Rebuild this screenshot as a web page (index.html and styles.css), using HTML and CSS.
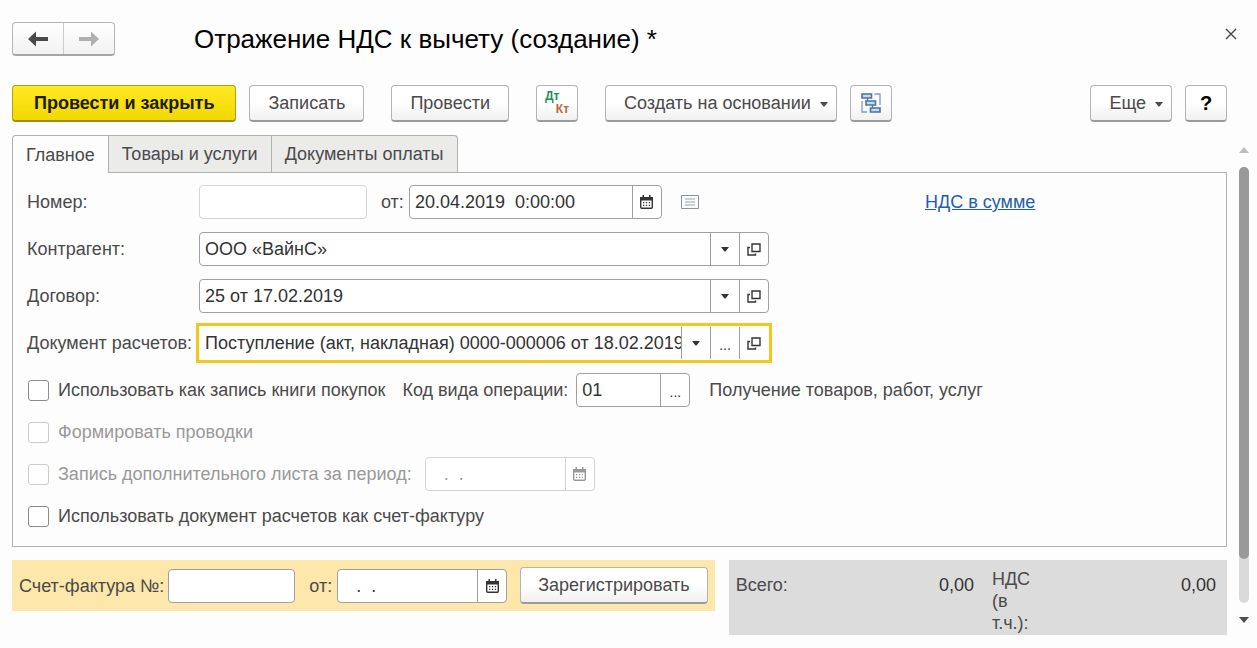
FILE: index.html
```html
<!DOCTYPE html>
<html lang="ru">
<head>
  <meta charset="UTF-8">
  <meta name="viewport" content="width=device-width, initial-scale=1.0">
  <title>Отражение НДС к вычету (создание) *</title>
  <link rel="stylesheet" href="styles.css">
</head>
<body>
  <!-- shared icons -->
  <svg class="sprite" width="0" height="0" aria-hidden="true">
    <symbol id="calendar" viewBox="0 0 13 14">
      <path d="M.7 3v9.300q0 1 1 1h9.600q1 0 1-1V3" fill="none" stroke="currentColor" stroke-width="1.4"/>
      <path d="M0 2h13v3.500H0zM2.500 0H4v3H2.500zM9 0h1.500v3H9z" fill="currentColor"/>
      <path d="M3 7h1.300v1.300H3zM5.900 7h1.300v1.300H5.900zM8.800 7h1.300v1.300H8.800zM3 9.800h1.300v1.300H3zM5.900 9.800h1.300v1.300H5.900zM8.800 9.800h1.300v1.300H8.800z" fill="currentColor"/>
    </symbol>
    <symbol id="open" viewBox="0 0 14 13">
      <path d="M5 1h8v7.500H5zM3 4.500H1V12h7.500V10.500" fill="none" stroke="currentColor" stroke-width="1.4"/>
    </symbol>
    <symbol id="down" viewBox="0 0 8 5">
      <path d="M0 0h8L4.500 4.500h-1z" fill="currentColor"/>
    </symbol>
  </svg>

  <div class="window">
    <header class="header">
      <div class="nav">
        <button type="button" aria-label="Назад"><svg width="20" height="16" viewBox="0 0 20 16"><path d="M8 .5L0 8l8 7.500V10h12V6H8z" fill="#4a4a4a"/></svg></button>
        <button type="button" aria-label="Вперед"><svg width="20" height="16" viewBox="0 0 20 16"><path d="M12 .5L20 8l-8 7.500V10H0V6h12z" fill="#b0b0b0"/></svg></button>
      </div>
      <h1>Отражение НДС к вычету (создание) *</h1>
      <button class="close" type="button" aria-label="Закрыть"><svg width="12" height="12" viewBox="0 0 12 12"><path d="M1 1l10 10M11 1L1 11" stroke="#444" stroke-width="1.400"/></svg></button>
    </header>

    <div class="toolbar">
      <button class="btn btn-main" type="button">Провести и закрыть</button>
      <button class="btn" type="button">Записать</button>
      <button class="btn spaced" type="button">Провести</button>
      <button class="btn btn-icon spaced" type="button"><span class="dtkt"><span class="dt">Дт</span><span class="kt">Кт</span></span></button>
      <button class="btn spaced" type="button">Создать на основании<svg class="caret" width="8" height="5"><use href="#down"/></svg></button>
      <button class="btn btn-icon" type="button" aria-label="Структура подчиненности">
        <svg width="20" height="20" viewBox="0 0 20 20">
          <path d="M13.500 1H19v11M1 8v11h5" fill="none" stroke="#7d9cc0" stroke-width="1.300"/>
          <path d="M1 1h9.500v4H1zM5 8h9.500v4H5zM9.500 15H19v4H9.500z" fill="#c4daf0" stroke="#4673a8" stroke-width="1.600"/>
          <path d="M6.500 5v3M11.500 12v3" stroke="#4673a8" stroke-width="1.300"/>
        </svg>
      </button>
      <button class="btn btn-more" type="button">Еще<svg class="caret" width="8" height="5"><use href="#down"/></svg></button>
      <button class="btn btn-icon btn-help" type="button">?</button>
    </div>

    <div class="body">
      <main class="content">
        <div class="tabs" role="tablist">
          <button class="tab active" type="button" role="tab" aria-selected="true">Главное</button>
          <button class="tab" type="button" role="tab" aria-selected="false">Товары и услуги</button>
          <button class="tab" type="button" role="tab" aria-selected="false">Документы оплаты</button>
        </div>

        <form class="panel">
          <div class="row">
            <div class="row-main">
              <label class="name" for="number">Номер:</label>
              <div class="field number disabled"><input id="number" type="text" disabled></div>
              <label class="from" for="date">от:</label>
              <div class="field date-time">
                <input id="date" type="text" value="20.04.2019  0:00:00">
                <button type="button" aria-label="Выбрать дату"><svg width="13" height="14"><use href="#calendar"/></svg></button>
              </div>
              <svg class="list" width="18" height="14" viewBox="0 0 18 14"><path d="M.5.5h17v13H.5z" fill="#fafbfc" stroke="#8792a3"/><path d="M4 4h10M4 7h10M4 10h10" stroke="#98a5b8"/></svg>
            </div>
            <a href="#">НДС в сумме</a>
          </div>
          <div class="row">
            <label class="name" for="partner">Контрагент:</label>
            <div class="field wide">
              <input id="partner" type="text" value="ООО «ВайнС»">
              <button type="button" aria-label="Выбрать"><svg width="8" height="5"><use href="#down"/></svg></button>
              <button type="button" aria-label="Открыть"><svg width="14" height="13"><use href="#open"/></svg></button>
            </div>
          </div>
          <div class="row">
            <label class="name" for="contract">Договор:</label>
            <div class="field wide">
              <input id="contract" type="text" value="25 от 17.02.2019">
              <button type="button" aria-label="Выбрать"><svg width="8" height="5"><use href="#down"/></svg></button>
              <button type="button" aria-label="Открыть"><svg width="14" height="13"><use href="#open"/></svg></button>
            </div>
          </div>
          <div class="row">
            <label class="name" for="doc">Документ расчетов:</label>
            <div class="field wide focused">
              <input id="doc" type="text" value="Поступление (акт, накладная) 0000-000006 от 18.02.2019">
              <button type="button" aria-label="Выбрать"><svg width="8" height="5"><use href="#down"/></svg></button>
              <button class="dots" type="button">...</button>
              <button type="button" aria-label="Открыть"><svg width="14" height="13"><use href="#open"/></svg></button>
            </div>
          </div>
          <div class="row">
            <label class="check"><input type="checkbox">Использовать как запись книги покупок</label>
            <label class="code-label" for="code">Код вида операции:</label>
            <div class="field code">
              <input id="code" type="text" value="01">
              <button class="dots" type="button">...</button>
            </div>
            <span class="hint">Получение товаров, работ, услуг</span>
          </div>
          <div class="row tight">
            <label class="check off"><input type="checkbox" disabled>Формировать проводки</label>
          </div>
          <div class="row tight">
            <label class="check off"><input type="checkbox" disabled>Запись дополнительного листа за период:</label>
            <div class="field date period disabled">
              <input type="text" value="  .  ." aria-label="Период" disabled>
              <button type="button" aria-label="Выбрать дату" disabled><svg width="13" height="14"><use href="#calendar"/></svg></button>
            </div>
          </div>
          <div class="row tight">
            <label class="check"><input type="checkbox">Использовать документ расчетов как счет-фактуру</label>
          </div>
        </form>

        <div class="bottom">
          <div class="invoice">
            <label for="invoice">Счет-фактура №:</label>
            <div class="field invoice-number"><input id="invoice" type="text"></div>
            <label class="from" for="invoice-date">от:</label>
            <div class="field date">
              <input id="invoice-date" type="text" value="  .  .">
              <button type="button" aria-label="Выбрать дату"><svg width="13" height="14"><use href="#calendar"/></svg></button>
            </div>
            <button class="btn" type="button">Зарегистрировать</button>
          </div>
          <div class="totals">
            <span>Всего:</span>
            <span class="sum">0,00</span>
            <span class="vat">НДС (в т.ч.):</span>
            <span class="sum">0,00</span>
          </div>
        </div>
      </main>

      <div class="scroll">
        <svg width="10" height="6" viewBox="0 0 10 6"><path d="M5 0l5 6H0z" fill="#bdbdbd"/></svg>
        <div class="track"><div class="thumb"></div></div>
        <svg width="10" height="6" viewBox="0 0 10 6"><path d="M0 0h10L5 6z" fill="#4d4d4d"/></svg>
      </div>
    </div>
  </div>
</body>
</html>
```
FILE: styles.css
```css
* {
  box-sizing: border-box;
}
body {
  margin: 0;
  background-color: #fdfdfd;
  color: #4a4a4a;
  font-family: "Liberation Sans", Arial, sans-serif;
  font-size: 18px;
  line-height: 22px;
}
button, input {
  font: inherit;
  color: inherit;
}
button {
  padding: 0;
  border: none;
  background: none;
}
.sprite {
  position: absolute;
}
.window {
  padding: 21px 8px 12px 12px;
}

/* header */
.header {
  display: flex;
  align-items: center;
  padding-right: 12px;
}
.nav {
  display: flex;
  width: 103px;
  height: 34px;
  border: 1px solid #b5b5b5;
  border-bottom: 2px solid #a5a5a5;
  border-radius: 4px;
  background: linear-gradient(#fff, #f2f2f2);
}
.nav button {
  flex: 1;
  display: flex;
  align-items: center;
  justify-content: center;
}
.nav button + button {
  border-left: 1px solid #ccc;
}
h1 {
  flex: 1;
  margin: 0;
  padding-left: 79px;
  color: #000;
  font-size: 26px;
  font-weight: normal;
  line-height: 36px;
}
.close {
  align-self: flex-start;
  display: flex;
  padding: 7px 0;
}

/* toolbar */
.toolbar {
  display: flex;
  gap: 13px;
  padding: 28px 22px 0 0;
}
.btn {
  height: 37px;
  padding: 0 18px;
  border: 1px solid #b3b3b3;
  border-bottom: 2px solid #9b9b9b;
  border-radius: 4px;
  background: linear-gradient(#fff 50%, #f0f0f0);
  white-space: nowrap;
}
.btn-main {
  padding: 0 21px;
  border-color: #b3a200;
  border-bottom-color: #9c8e00;
  background: linear-gradient(#ffe924, #f2d800);
  color: #1c1a00;
  font-weight: bold;
}
.spaced {
  margin-left: 14px;
}
.caret {
  margin-left: 9px;
  margin-right: -10px;
  vertical-align: 2px;
}
.btn-icon {
  display: flex;
  align-items: center;
  justify-content: center;
  width: 42px;
  padding: 0;
}
.btn-more {
  margin-left: auto;
}
.btn-help {
  color: #000;
  font-weight: bold;
  font-size: 20px;
}
.dtkt {
  display: flex;
  flex-direction: column;
  width: 24px;
  font-size: 12px;
  font-weight: bold;
  line-height: 13px;
}
.dt {
  color: #1f8f5c;
  text-align: left;
}
.kt {
  color: #b86b3c;
  text-align: right;
}

/* form */
.body {
  display: flex;
  gap: 12px;
  padding-top: 13px;
}
.content {
  flex: 1;
  min-width: 0;
}
.tabs {
  display: flex;
}
.tab {
  height: 37px;
  padding: 0 13px;
  border: 1px solid #b0b0b0;
  border-left: none;
  background-color: #ebebea;
  border-bottom: none;
}
.tab.active {
  height: 38px;
  margin-bottom: -1px;
  border-left: 1px solid #b0b0b0;
  border-top-left-radius: 4px;
  background-color: #fdfdfd;
}
.tab:last-child {
  border-top-right-radius: 4px;
}
.panel {
  padding: 12px 14px 13px;
  border: 1px solid #b0b0b0;
}
.row {
  display: flex;
  align-items: center;
  height: 34px;
  margin-top: 13px;
}
.row:first-child {
  margin-top: 0;
}
.row.tight {
  margin-top: 8px;
}
.row-main {
  display: flex;
  align-items: center;
  width: 898px;
}
.name {
  flex: none;
  width: 172px;
  white-space: nowrap;
}
.from {
  margin: 0 5px 0 14px;
}
.field {
  display: flex;
  height: 34px;
  border: 1px solid #a0a0a0;
  border-radius: 4px;
  background-color: #fff;
  color: #333;
}
.field input {
  flex: 1;
  width: 0;
  min-width: 0;
  padding: 0 0 0 5px;
  border: none;
  outline: none;
  background: none;
  white-space: pre;
}
.field button {
  flex: none;
  display: flex;
  align-items: center;
  justify-content: center;
  width: 29px;
  border-left: 1px solid #a0a0a0;
}
.field .dots {
  padding-top: 4px;
  font-size: 14px;
}
.field.disabled,
.field.disabled button {
  border-color: #d4d4d4;
  color: #999;
}
.field.focused {
  border-color: transparent;
  outline: 3px solid #f2c81e;
  border-radius: 0;
}
.number {
  width: 168px;
}
.date-time {
  width: 253px;
}
.wide {
  width: 570px;
}
.code {
  width: 114px;
}
.date {
  width: 170px;
}
.date input {
  padding-left: 8px;
}
.period {
  margin-left: 13px;
}
.list {
  margin-left: 19px;
}
a {
  color: #1d5fa8;
}
.check {
  display: flex;
  align-items: center;
}
.check input {
  appearance: none;
  width: 21px;
  height: 21px;
  margin: 0 9px 0 1px;
  border: 1px solid #8c8c8c;
  border-radius: 3px;
  background-color: #fff;
}
.check.off {
  color: #999;
}
.check.off input {
  border-color: #ccc;
}
.code-label {
  margin: 0 8px 0 17px;
}
.hint {
  margin-left: 19px;
}

/* bottom */
.bottom {
  display: flex;
  align-items: flex-start;
  gap: 14px;
  padding-top: 13px;
}
.invoice {
  display: flex;
  align-items: center;
  height: 51px;
  padding: 0 7px;
  background-color: #fde7ab;
}
.invoice-number {
  width: 127px;
  margin-left: 4px;
}
.invoice .btn {
  padding: 0 17px;
  margin-left: 13px;
}
.totals {
  flex: 1;
  display: grid;
  grid-template-columns: auto 1fr 38px 1fr;
  column-gap: 18px;
  padding: 8px 11px 0 7px;
  min-height: 75px;
  background-color: #dcdcdc;
}
.totals span {
  padding-top: 6px;
}
.totals .vat {
  padding-top: 0;
}
.totals .sum {
  color: #333;
  text-align: right;
}

/* scrollbar */
.scroll {
  display: flex;
  flex-direction: column;
  gap: 14px;
  width: 10px;
  padding: 12px 0;
}
.scroll svg {
  flex: none;
}
.track {
  flex: 1;
  border-radius: 5px;
  background-color: #dadada;
}
.thumb {
  height: 90%;
  border-radius: 5px;
  background-color: #999;
}
```
